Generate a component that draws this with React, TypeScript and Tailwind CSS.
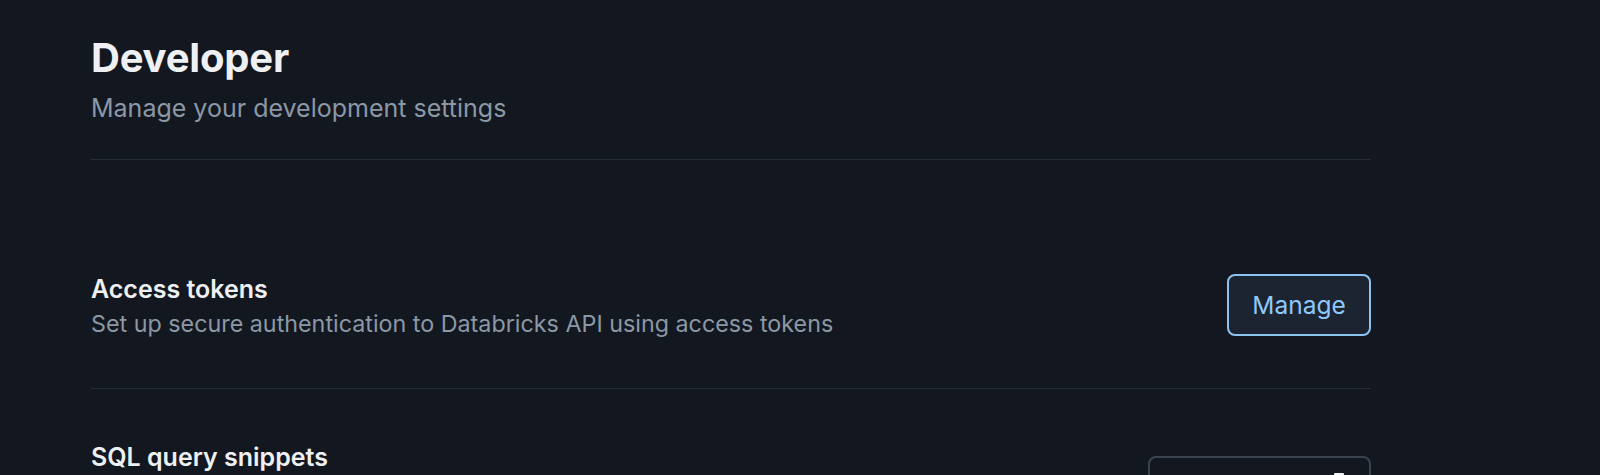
export default function App() {
  return (
    <div
      className="min-h-screen bg-[#13171f] text-[#eef0f3]"
      style={{ fontFamily: "Inter, 'Noto Sans', sans-serif" }}
    >
      <div className="w-[1371px] pl-[91px] pt-[34px]">
        <header className="pb-[36px] border-b border-[#272d36]">
          <h1 className="text-[40px] font-bold leading-[48px] tracking-[-0.2px] text-[#eef0f3]">
            Developer
          </h1>
          <p className="mt-[11px] text-[25px] leading-[30px] text-[#8b98a6]">
            Manage your development settings
          </p>
        </header>

        <div className="mt-[59px] flex items-center justify-between border-b border-[#272d36] pt-[52px] pb-[49px]">
          <div className="pt-[3px]">
            <h2 className="text-[25px] font-semibold leading-[30px] text-[#eef0f3]">Access tokens</h2>
            <p className="mt-[5px] text-[23.3px] leading-[30px] text-[#8b98a6]">
              Set up secure authentication to Databricks API using access tokens
            </p>
          </div>
          <button className="h-[62px] w-[144px] rounded-[8px] border-2 border-[#8cc3f0] bg-[#1b2430] text-[24.5px] text-[#8fc8ff]">
            Manage
          </button>
        </div>

        <div className="flex items-start justify-between pt-[53px] pb-[52px]">
          <div>
            <h2 className="text-[25px] font-semibold leading-[30px] text-[#eef0f3]">SQL query snippets</h2>
            <p className="mt-[5px] text-[23.3px] leading-[30px] text-[#8b98a6]">
              Create and manage shortcuts for frequently used SQL queries
              <br />
              that can be inserted into the SQL editor
            </p>
          </div>
          <button className="mt-[14px] flex h-[62px] w-[223px] items-center justify-between rounded-[8px] border-2 border-[#3a4450] bg-[#13171f] px-[20px] text-[24.5px] text-[#eef0f3]">
            <span>Manage</span>
            <svg width="10" height="28" viewBox="0 0 10 28" className="mr-[5px]">
              <rect x="0" y="0" width="10" height="28" rx="1" fill="#f2f4f7" />
            </svg>
          </button>
        </div>
      </div>
    </div>
  );
}
